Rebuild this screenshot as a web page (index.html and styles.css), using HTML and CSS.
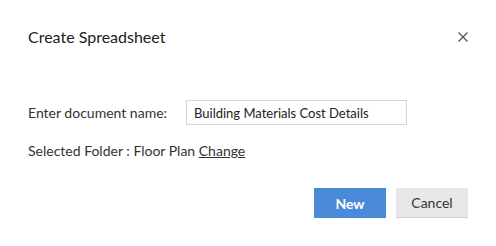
FILE: index.html
```html
<!DOCTYPE html>
<html lang="en">
<head>
  <meta charset="UTF-8" />
  <title>Create Spreadsheet</title>
  <link rel="stylesheet" href="styles.css">
</head>
<body>

  <!-- CREATE SPREADSHEET DIALOG -->
  <section class="dialog" aria-label="Create Spreadsheet">
    <header class="dialog-head">
      <h2>Create Spreadsheet</h2>
      <button class="close-btn" aria-label="Close" title="Close">
        <svg width="10" height="10" viewBox="0 0 10 10" aria-hidden="true">
          <path d="M0.5 0.5 L9.5 9.5 M9.5 0.5 L0.5 9.5" stroke="#555" stroke-width="1.3" fill="none" />
        </svg>
      </button>
    </header>

    <div class="dialog-body">
      <div class="field-row">
        <label for="docName">Enter document name:</label>
        <input type="text" id="docName" value="Building Materials Cost Details" />
      </div>
      <p class="folder">Selected Folder : Floor Plan <a href="#">Change</a></p>
    </div>

    <footer class="dialog-foot">
      <button class="btn btn-primary">New</button>
      <button class="btn btn-secondary">Cancel</button>
    </footer>
  </section>

</body>
</html>
```

FILE: styles.css
```css
* {
  box-sizing: border-box;
}

body {
  margin: 0;
  background: #fff;
  font-family: 'Lato', sans-serif;
  color: #333;
}

.dialog {
  width: 496px;
  padding: 27px 28px 0 28px;
}

.dialog-head {
  display: flex;
  justify-content: space-between;
  align-items: center;
  height: 20px;
}

.dialog-head h2 {
  margin: 0;
  font-size: 16px;
  line-height: 20px;
  font-weight: 400;
  color: #222;
}

.close-btn {
  width: 10px;
  height: 10px;
  padding: 0;
  border: none;
  background: transparent;
  cursor: pointer;
  display: flex;
}

.dialog-body {
  padding-top: 53px;
}

.field-row {
  display: flex;
  align-items: center;
}

.field-row label {
  width: 158px;
  font-size: 14px;
}

.field-row input {
  width: 221px;
  height: 25px;
  padding: 0 7px;
  border: 1px solid #d6d6d6;
  border-radius: 0;
  font-family: inherit;
  font-size: 13px;
  color: #222;
  outline: none;
}

.folder {
  margin: 17px 0 0 0;
  font-size: 14px;
  line-height: 17px;
}

.folder a {
  color: #333;
  text-decoration: underline;
}

.dialog-foot {
  display: flex;
  justify-content: flex-end;
  gap: 10px;
  padding-top: 29px;
}

.btn {
  width: 72px;
  height: 30px;
  border: none;
  border-radius: 0;
  font-family: inherit;
  font-size: 14px;
  cursor: pointer;
}

.btn-primary {
  background: #4a8ad9;
  color: #fff;
  font-weight: 700;
}

.btn-secondary {
  background: #e8e8e8;
  color: #333;
  border-bottom: 1px solid #cfcfcf;
}
```
